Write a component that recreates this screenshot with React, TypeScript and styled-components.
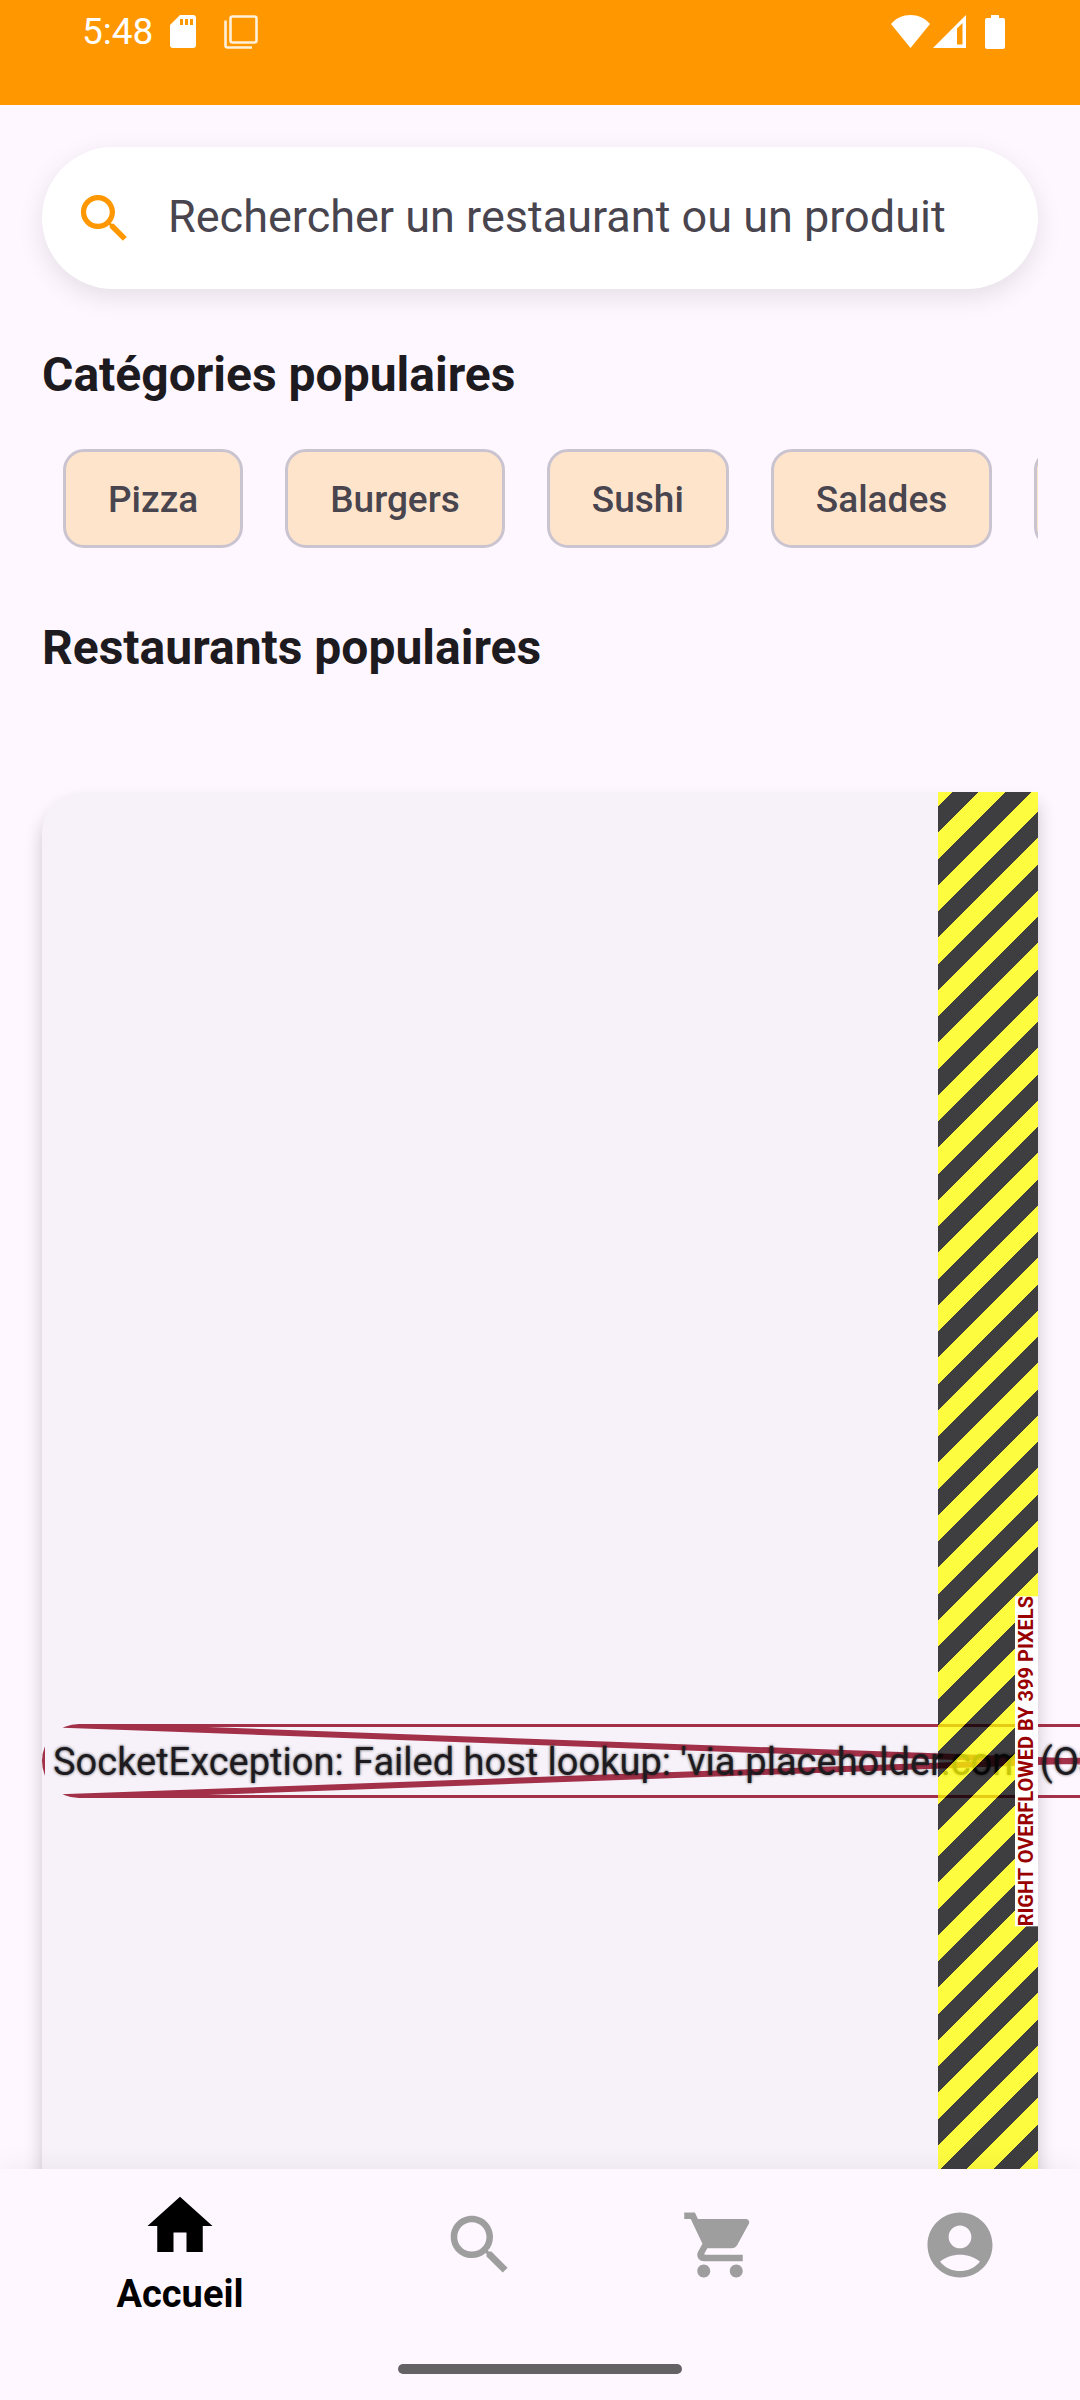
import React from "react";
import styled, { createGlobalStyle } from "styled-components";

const GlobalStyle = createGlobalStyle`
  *, *::before, *::after { box-sizing: border-box; }
  body {
    margin: 0;
    background: #fef7ff;
    color: #1d1b20;
    font-family: Roboto, "Liberation Sans", sans-serif;
  }
`;

const Screen = styled.div`
  display: flex;
  flex-direction: column;
  height: 100vh;
  overflow: hidden;
`;

const StatusBar = styled.header`
  flex: none;
  display: flex;
  justify-content: space-between;
  align-items: center;
  padding: 10px 75px 51px 82px;
  background: #ff9800;
  color: #fff;
`;

const StatusGroup = styled.div<{ $gap: number }>`
  display: flex;
  align-items: center;
  gap: ${(p) => p.$gap}px;
`;

const Clock = styled.time`
  font-size: 37px;
  line-height: 44px;
`;

const Main = styled.main`
  flex: 1;
  min-height: 0;
  overflow: hidden;
  padding: 42px;
`;

const SearchBox = styled.label`
  display: flex;
  align-items: center;
  gap: 32px;
  height: 142px;
  padding: 0 31px;
  border-radius: 71px;
  background: #fff;
  color: #ff9800;
  box-shadow: 0 8px 26px rgba(0, 0, 0, 0.1);
`;

const SearchInput = styled.input`
  flex: 1;
  min-width: 0;
  padding: 0 0 2px;
  border: 0;
  outline: 0;
  background: none;
  color: #1d1b20;
  font-family: inherit;
  font-size: 45px;
  line-height: 56px;

  &::placeholder {
    color: #49454f;
    opacity: 1;
  }
`;

const SectionTitle = styled.h2<{ $top: number }>`
  margin: ${(p) => p.$top}px 0 0;
  font-size: 48px;
  font-weight: 700;
  line-height: 56px;
`;

const ChipRow = styled.div`
  display: flex;
  gap: 42px;
  margin-top: 46px;
  padding-left: 21px;
  overflow: hidden;
`;

const Chip = styled.button`
  flex: none;
  height: 99px;
  padding: 2px 42px 0;
  border: 3px solid #cac4d0;
  border-radius: 21px;
  background: #ffe4cc;
  color: #49454f;
  font-family: inherit;
  font-size: 37px;
  font-weight: 500;
  line-height: 44px;
`;

const Card = styled.article`
  position: relative;
  display: flex;
  align-items: center;
  height: 1938px;
  margin-top: 116px;
  border-radius: 40px 0 0 40px;
  background: #f7f2fa;
  box-shadow: 0 12px 18px rgba(0, 0, 0, 0.2);
`;

const ImageError = styled.div`
  position: relative;
  flex: none;
  width: 2043px;
  padding: 12px 11px 10px;
  border-radius: 37px;
  overflow: hidden;
`;

const Cross = styled.svg`
  position: absolute;
  inset: 0;
  width: 100%;
  height: 100%;
`;

const ErrorText = styled.p`
  position: relative;
  margin: 0;
  font-size: 38px;
  line-height: 52px;
  white-space: nowrap;
  text-shadow: 0 0 3px rgba(0, 0, 0, 0.7);
`;

/* Each 105px tile holds exactly four stripe periods, so the tiles join up. */
const Overflow = styled.div`
  position: absolute;
  top: 0;
  right: 0;
  bottom: 0;
  width: 100px;
  display: flex;
  align-items: center;
  justify-content: flex-end;
  background: repeating-linear-gradient(
    135deg,
    rgba(255, 255, 0, 0.75) 0 7%,
    rgba(0, 0, 0, 0.75) 7% 19.5%,
    rgba(255, 255, 0, 0.75) 19.5% 25%
  );
  background-size: 105px 105px;
`;

const OverflowLabel = styled.span`
  background: #fff;
  color: #900;
  font-size: 20px;
  font-weight: 700;
  line-height: 23px;
  white-space: nowrap;
  writing-mode: vertical-rl;
  transform: rotate(180deg);
`;

const NavBar = styled.footer`
  position: relative;
  flex: none;
  background: #fef7ff;
  box-shadow: 0 -4px 24px rgba(0, 0, 0, 0.05);
`;

const NavItems = styled.nav`
  display: flex;
  height: 195px;
`;

const NavItem = styled.button<{ $active?: boolean }>`
  flex: ${(p) => (p.$active ? 3 : 2)} 1 0;
  display: flex;
  flex-direction: column;
  align-items: center;
  gap: 7px;
  padding: ${(p) => (p.$active ? 18 : 37)}px 0 0;
  border: 0;
  background: none;
  color: ${(p) => (p.$active ? "#000" : "#9e9e9e")};
  font-family: inherit;
  font-size: 38px;
  font-weight: 700;
  line-height: 44px;
`;

const HomeIndicator = styled.div`
  width: 284px;
  height: 10px;
  margin: 0 auto 26px;
  border-radius: 5px;
  background: #656266;
`;

const ICONS = {
  search:
    "M15.5 14h-.79l-.28-.27C15.41 12.59 16 11.11 16 9.5 16 5.91 13.09 3 9.5 3S3 5.91 3 9.5 5.91 16 9.5 16c1.61 0 3.09-.59 4.23-1.57l.27.28v.79l5 4.99L20.49 19l-4.99-5zm-6 0C7.01 14 5 11.99 5 9.5S7.01 5 9.5 5 14 7.01 14 9.5 11.99 14 9.5 14z",
  home: "M10 20v-6h4v6h5v-8h3L12 3 2 12h3v8z",
  cart: "M7 18c-1.1 0-1.99.9-1.99 2S5.9 22 7 22s2-.9 2-2-.9-2-2-2zM1 2v2h2l3.6 7.59-1.35 2.45c-.16.28-.25.61-.25.96 0 1.1.9 2 2 2h12v-2H7.42c-.14 0-.25-.11-.25-.25l.03-.12.9-1.63h7.45c.75 0 1.41-.41 1.75-1.03l3.58-6.49c.08-.14.12-.31.12-.48 0-.55-.45-1-1-1H5.21l-.94-2H1zm16 16c-1.1 0-1.99.9-1.99 2s.89 2 1.99 2 2-.9 2-2-.9-2-2-2z",
  account:
    "M12 2C6.48 2 2 6.48 2 12s4.48 10 10 10 10-4.48 10-10S17.52 2 12 2zm0 4c1.93 0 3.5 1.57 3.5 3.5S13.93 13 12 13s-3.5-1.57-3.5-3.5S10.07 6 12 6zm0 14c-2.03 0-4.43-.82-6.14-2.88C7.55 15.8 9.68 15 12 15s4.45.8 6.14 2.12C16.43 19.18 14.03 20 12 20z",
};

function Icon({ name, size }: { name: keyof typeof ICONS; size: number }) {
  return (
    <svg width={size} height={size} viewBox="0 0 24 24" fill="currentColor" aria-hidden="true">
      <path d={ICONS[name]} />
    </svg>
  );
}

const categories = ["Pizza", "Burgers", "Sushi", "Salades", "Desserts"];

export default function App() {
  return (
    <>
      <GlobalStyle />
      <Screen>
        <StatusBar>
          <StatusGroup $gap={17}>
            <Clock>5:48</Clock>
            <StatusGroup $gap={28}>
              <svg width="26" height="34" viewBox="0 0 26 34" fill="#fff" aria-hidden="true">
                <path
                  fillRule="evenodd"
                  d="M10 0H23a3 3 0 0 1 3 3V30a3 3 0 0 1-3 3H3a3 3 0 0 1-3-3V10zM10 4v6h3V4zm5 0v6h3V4zm5 0v6h3V4z"
                />
              </svg>
              <svg width="34" height="34" viewBox="0 0 34 34" fill="none" stroke="#fff" strokeOpacity="0.85" strokeWidth="2.6" aria-hidden="true">
                <rect x="6.5" y="1.5" width="26" height="26" rx="2" />
                <path d="M1.5 5.5V30.5a2 2 0 0 0 2 2H28" />
              </svg>
            </StatusGroup>
          </StatusGroup>
          <StatusGroup $gap={19}>
            <StatusGroup $gap={3}>
              <svg width="39" height="34" viewBox="0 0 39 34" fill="#fff" aria-hidden="true">
                <path d="M0 9C5 3 12 0 19.5 0S34 3 39 9L19.5 33z" />
              </svg>
              <svg width="33" height="34" viewBox="0 0 33 34" fill="#fff" aria-hidden="true">
                <path fillRule="evenodd" d="M33 0V33H0zM29.5 8L24 13.5V29.5H29.5z" />
              </svg>
            </StatusGroup>
            <svg width="20" height="34" viewBox="0 0 20 34" fill="#fff" aria-hidden="true">
              <path d="M6 0h8v3h4a2 2 0 0 1 2 2v27a2 2 0 0 1-2 2H2a2 2 0 0 1-2-2V5a2 2 0 0 1 2-2h4z" />
            </svg>
          </StatusGroup>
        </StatusBar>

        <Main>
          <SearchBox>
            <Icon name="search" size={63} />
            <SearchInput
              type="text"
              aria-label="Rechercher"
              placeholder="Rechercher un restaurant ou un produit"
            />
          </SearchBox>

          <SectionTitle $top={58}>Catégories populaires</SectionTitle>
          <ChipRow>
            {categories.map((name) => (
              <Chip key={name} type="button">
                {name}
              </Chip>
            ))}
          </ChipRow>

          <SectionTitle $top={72}>Restaurants populaires</SectionTitle>
          <Card>
            <ImageError>
              <Cross viewBox="0 0 2043 74" preserveAspectRatio="none" fill="none" stroke="#8d021f" strokeOpacity="0.81" strokeWidth="6" aria-hidden="true">
                <path d="M0 0H2043V74H0ZL2043 74M0 74L2043 0" />
              </Cross>
              <ErrorText>
                SocketException: Failed host lookup: 'via.placeholder.com' (OS Error: No address
                associated with hostname, errno = 7)
              </ErrorText>
            </ImageError>
            <Overflow>
              <OverflowLabel>RIGHT OVERFLOWED BY 399 PIXELS</OverflowLabel>
            </Overflow>
          </Card>
        </Main>

        <NavBar>
          <NavItems>
            <NavItem type="button" $active aria-current="page">
              <Icon name="home" size={78} />
              Accueil
            </NavItem>
            <NavItem type="button" aria-label="Recherche">
              <Icon name="search" size={78} />
            </NavItem>
            <NavItem type="button" aria-label="Panier">
              <Icon name="cart" size={78} />
            </NavItem>
            <NavItem type="button" aria-label="Profil">
              <Icon name="account" size={78} />
            </NavItem>
          </NavItems>
          <HomeIndicator />
        </NavBar>
      </Screen>
    </>
  );
}
